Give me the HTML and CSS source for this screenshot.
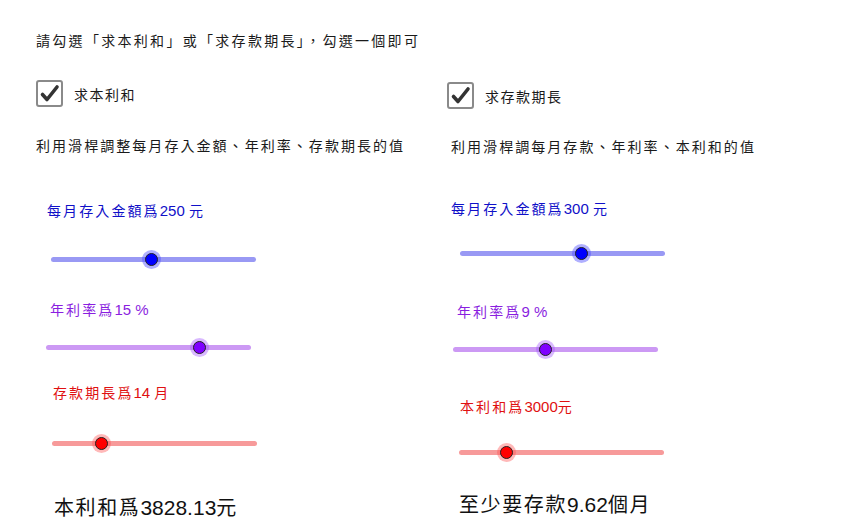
FILE: index.html
```html
<!DOCTYPE html>
<html lang="zh-Hant">
<head>
<meta charset="utf-8">
<link rel="stylesheet" href="styles.css">
</head>
<body>
<div class="applet">
  <div class="txt header" style="left:36px;top:33px">請勾選「求本利和」或「求存款期長」，勾選一個即可</div>

  <div class="check" style="left:36px;top:80px">
    <span class="box"><svg viewBox="0 0 27 27" width="27" height="27"><path d="M6.5 14.5 L11 19.5 L21 7" fill="none" stroke="#333" stroke-width="3.6" stroke-linecap="round" stroke-linejoin="round"/></svg></span>
    <span class="txt label">求本利和</span>
  </div>
  <div class="check" style="left:447px;top:82px">
    <span class="box"><svg viewBox="0 0 27 27" width="27" height="27"><path d="M6.5 14.5 L11 19.5 L21 7" fill="none" stroke="#333" stroke-width="3.6" stroke-linecap="round" stroke-linejoin="round"/></svg></span>
    <span class="txt label">求存款期長</span>
  </div>

  <div class="txt note" style="left:36px;top:138px">利用滑桿調整每月存入金額、年利率、存款期長的值</div>
  <div class="txt note" style="left:451px;top:139px">利用滑桿調每月存款、年利率、本利和的值</div>

  <!-- left column -->
  <div class="txt slabel blue" style="left:47px;top:203px">每月存入金額爲<span class="num">250 </span>元</div>
  <div class="slider blue" style="left:51px;top:256px;width:205px"><span class="track"></span><span class="knob" style="left:100px"></span></div>

  <div class="txt slabel purple" style="left:50px;top:302px">年利率爲<span class="num">15 %</span></div>
  <div class="slider purple" style="left:46px;top:344px;width:205px"><span class="track"></span><span class="knob" style="left:153px"></span></div>

  <div class="txt slabel red" style="left:53px;top:385px">存款期長爲<span class="num">14 </span>月</div>
  <div class="slider red" style="left:52px;top:440px;width:205px"><span class="track"></span><span class="knob" style="left:49px"></span></div>

  <div class="txt result" style="left:54px;top:497px">本利和爲<span class="num">3828.13</span>元</div>

  <!-- right column -->
  <div class="txt slabel blue" style="left:451px;top:201px">每月存入金額爲<span class="num">300 </span>元</div>
  <div class="slider blue" style="left:460px;top:250px;width:205px"><span class="track"></span><span class="knob" style="left:121px"></span></div>

  <div class="txt slabel purple" style="left:457px;top:304px">年利率爲<span class="num">9 %</span></div>
  <div class="slider purple" style="left:453px;top:346px;width:205px"><span class="track"></span><span class="knob" style="left:92px"></span></div>

  <div class="txt slabel red" style="left:460px;top:399px">本利和爲<span class="num">3000</span>元</div>
  <div class="slider red" style="left:459px;top:449px;width:205px"><span class="track"></span><span class="knob" style="left:47px"></span></div>

  <div class="txt result" style="left:459px;top:494px">至少要存款<span class="num">9.62</span>個月</div>
</div>
</body>
</html>
```
FILE: styles.css
```css
html, body {
  margin: 0;
  padding: 0;
  background: #ffffff;
}
.applet {
  position: relative;
  width: 850px;
  height: 517px;
  overflow: hidden;
  background: #ffffff;
}
.txt {
  position: absolute;
  white-space: nowrap;
  font-family: "Noto Sans CJK TC", "Noto Sans CJK SC", sans-serif;
  font-weight: 400;
  line-height: 1;
  color: #111;
}
.num {
  font-family: "Liberation Sans", Arial, sans-serif;
  letter-spacing: 0;
}
.header {
  font-size: 14px;
  letter-spacing: 2.3px;
  color: #1a1a1a;
}
.note {
  font-size: 14px;
  letter-spacing: 2.05px;
  color: #1a1a1a;
}
.check {
  position: absolute;
  display: flex;
  align-items: center;
  gap: 11px;
}
.check .txt {
  position: static;
}
.box {
  width: 23px;
  height: 23px;
  border: 2px solid #8a8a8a;
  border-radius: 3px;
  display: flex;
  align-items: center;
  justify-content: center;
  background: #fff;
}
.box svg {
  display: block;
  flex: none;
}
.label {
  font-size: 14px;
  letter-spacing: 1.5px;
  color: #1a1a1a;
}
.slabel {
  font-size: 14px;
  letter-spacing: 2.1px;
}
.slabel .num {
  font-size: 15px;
}
.slabel.blue { color: #1010c8; }
.slabel.purple { color: #8a1ee0; }
.slabel.red { color: #e01010; }
.result {
  font-size: 20px;
  letter-spacing: 1.6px;
  color: #111;
}
.result .num {
  font-size: 21px;
}
.slider {
  position: absolute;
  height: 6px;
}
.track {
  display: block;
  height: 5px;
  border-radius: 3px;
  margin-top: 0.5px;
}
.slider.blue .track { background: #9999f4; }
.slider.purple .track { background: #cc99f4; }
.slider.red .track { background: #f79a9a; }
.knob {
  position: absolute;
  top: 3px;
  width: 11px;
  height: 11px;
  margin-left: -6.5px;
  margin-top: -6.5px;
  border-radius: 50%;
  border: 1px solid #222;
}
.slider.blue .knob { background: #0000ff; box-shadow: 0 0 0 3px rgba(80, 80, 255, 0.45); }
.slider.purple .knob { background: #7f00ff; box-shadow: 0 0 0 3px rgba(160, 80, 255, 0.4); }
.slider.red .knob { background: #ff0000; box-shadow: 0 0 0 3px rgba(255, 80, 80, 0.4); }
```
